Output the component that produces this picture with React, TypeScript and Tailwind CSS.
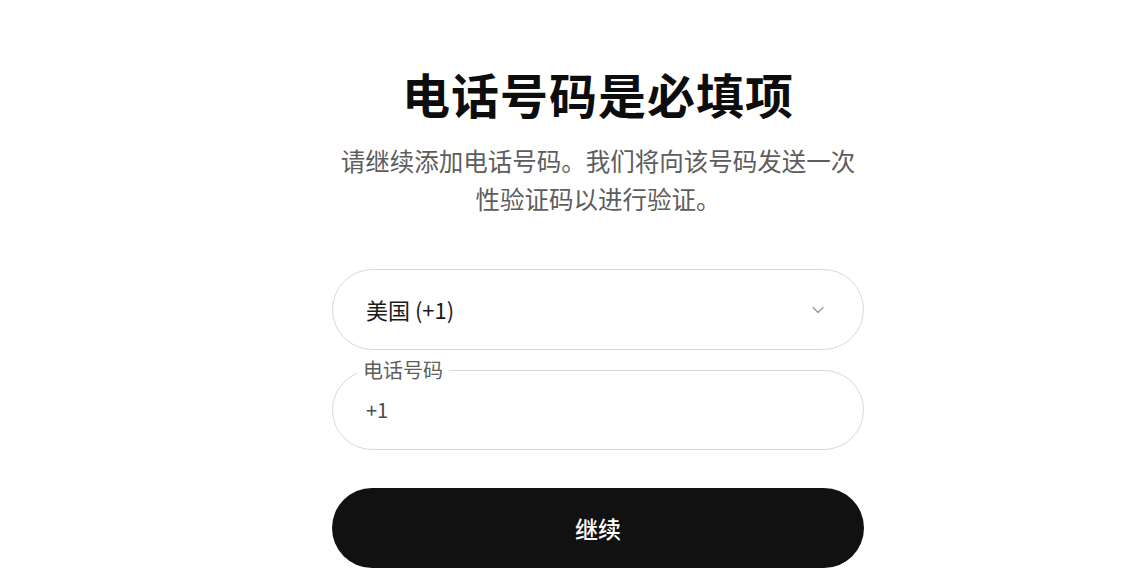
import { ChevronDown } from "lucide-react";

const font = { fontFamily: '"Noto Sans CJK SC", "Noto Sans", sans-serif' };

export default function App() {
  return (
    <div className="min-h-[587px] w-full bg-white flex justify-center pl-[52px] pt-[64px]" style={font}>
      <div className="w-[532px] flex flex-col items-center">
        <h1 className="text-[48px] leading-[58px] font-semibold text-[#0d0d0d] tracking-[1px]">
          电话号码是必填项
        </h1>
        <p className="mt-[20px] text-[24.5px] leading-[38px] text-[#5d5d5d] text-center">
          请继续添加电话号码。我们将向该号码发送一次性验证码以进行验证。
        </p>

        <div className="mt-[51px] w-full h-[81px] rounded-full border border-[#d9d9d9] flex items-center justify-between pl-[33px] pr-[35px]">
          <span className="text-[22px] text-[#1a1a1a]">美国 (+1)</span>
          <ChevronDown className="w-[20px] h-[20px] text-[#9a9a9a]" strokeWidth={1.5} />
        </div>

        <div className="relative mt-[20px] w-full h-[80px] rounded-full border border-[#d9d9d9] flex items-center pl-[33px]">
          <span className="absolute -top-[14px] left-[24px] bg-white px-[6px] text-[20px] leading-[26px] text-[#5e5e5e]">
            电话号码
          </span>
          <span className="text-[20px] text-[#4a4a4a]">+1</span>
        </div>

        <button className="mt-[38px] w-full h-[80px] rounded-full bg-[#111111] text-white text-[23px] font-medium flex items-center justify-center">
          继续
        </button>
      </div>
    </div>
  );
}
